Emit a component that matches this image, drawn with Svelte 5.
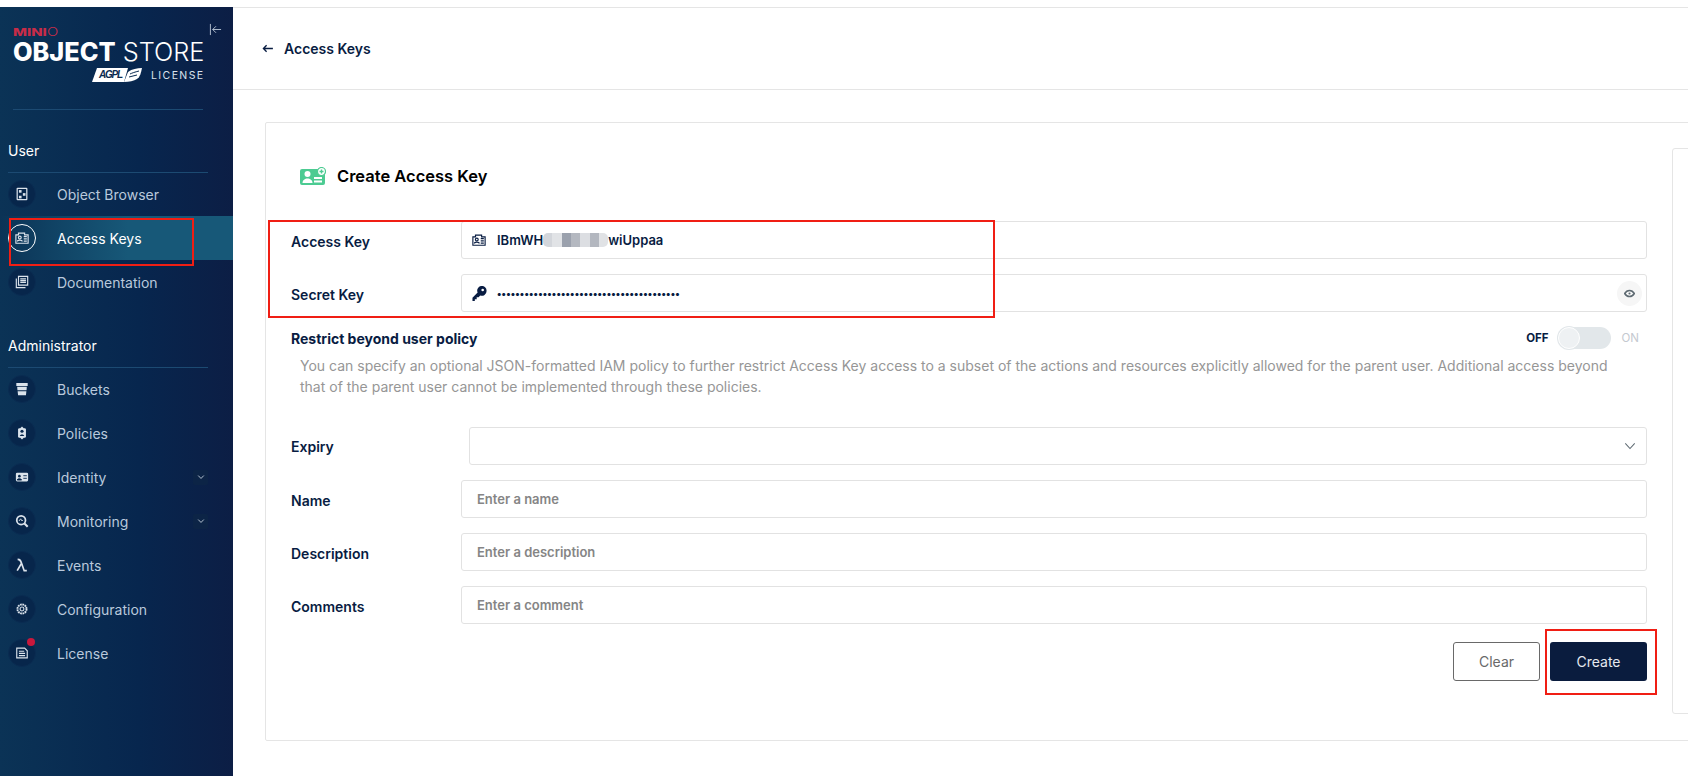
<script>
    let userItems = [
        { name: "Object Browser", icon: "browser" },
        { name: "Access Keys", icon: "keys", active: true },
        { name: "Documentation", icon: "docs" },
    ];
    let adminItems = [
        { name: "Buckets", icon: "buckets" },
        { name: "Policies", icon: "policies" },
        { name: "Identity", icon: "identity", more: true },
        { name: "Monitoring", icon: "monitoring", more: true },
        { name: "Events", icon: "events" },
        { name: "Configuration", icon: "config" },
        { name: "License", icon: "license", dot: true },
    ];
    let sections = [
        { title: "User", items: userItems },
        { title: "Administrator", items: adminItems },
    ];
    let secret = "•".repeat(40);
</script>

{#snippet idCard()}
    <svg viewBox="0 0 16 16" width="14" height="14" fill="none" stroke="currentColor" stroke-width="1.300">
        <path d="M1 4.500h3V2.500h7v2h4v9.500H1z" />
        <circle cx="5.500" cy="7.500" r="1.600" />
        <path d="M2.800 12c0-2 5.400-2 5.400 0M10 6.500h3.500M10 9h3.500M10 11.500h3.500" />
    </svg>
{/snippet}

{#snippet navIcon(name)}
    {#if name === "browser"}
        <svg viewBox="0 0 16 16" width="14" height="14" fill="none" stroke="currentColor" stroke-width="1.400">
            <rect x="2.500" y="1.500" width="11" height="13" rx="0.500" />
            <rect x="4.500" y="3.500" width="3" height="3" fill="currentColor" stroke="none" />
            <rect x="9" y="7" width="3" height="3" fill="currentColor" stroke="none" />
            <rect x="4.500" y="10" width="3" height="3" fill="currentColor" stroke="none" />
        </svg>
    {:else if name === "keys"}
        {@render idCard()}
    {:else if name === "docs"}
        <svg viewBox="0 0 16 16" width="14" height="14" fill="none" stroke="currentColor" stroke-width="1.300">
            <path d="M4 1.500h10.500v10H4zM1.500 4v10.500H12" />
            <path d="M6 4.500h6.500M6 6.500h6.500M6 8.500h6.500" />
        </svg>
    {:else if name === "buckets"}
        <svg viewBox="0 0 16 16" width="14" height="14" fill="currentColor">
            <path d="M1.500 1h13v3.500h-13zM2.500 5.500h11l-.3 4H2.800zM3 10.500h10l-.5 4.500h-9z" />
        </svg>
    {:else if name === "policies"}
        <svg viewBox="0 0 16 16" width="14" height="14" fill="currentColor">
            <path d="M8 .5 10 2.500h1.500l1 1v9l-1 1H10L8 15.500 6 13.500H4.500l-1-1v-9l1-1H6z" />
            <circle cx="8" cy="6" r="1.800" fill="#07264b" />
            <path d="M5.500 11.500c0-2.500 5-2.500 5 0z" fill="#07264b" />
        </svg>
    {:else if name === "identity"}
        <svg viewBox="0 0 16 16" width="14" height="14">
            <rect x="1" y="3" width="14" height="10" rx="1.500" fill="currentColor" />
            <circle cx="5" cy="7" r="1.500" fill="#07264b" />
            <path d="M2.500 11.500c0-2 5-2 5 0zM9.500 6.500h4M9.500 9.500h4" fill="#07264b" stroke="#07264b" />
        </svg>
    {:else if name === "monitoring"}
        <svg viewBox="0 0 16 16" width="14" height="14" fill="none" stroke="currentColor" stroke-width="2">
            <circle cx="7" cy="7" r="5" />
            <path d="m10.500 10.500 4 4" stroke-width="2.400" />
            <path d="M4.500 8 6.500 5.500 8 8l1-1" stroke-width="1" />
        </svg>
    {:else if name === "events"}
        <svg viewBox="0 0 16 16" width="14" height="14" fill="none" stroke="currentColor" stroke-width="1.900">
            <path d="M3 1.500c3 0 3.500 1.500 4.500 4.500l3 8.500h3M7.500 6 2.500 14.500" />
        </svg>
    {:else if name === "config"}
        <svg viewBox="0 0 16 16" width="14" height="14" fill="none" stroke="currentColor">
            <circle cx="8" cy="8" r="5.200" stroke-width="2.200" stroke-dasharray="2 .7" />
            <circle cx="8" cy="8" r="2.200" stroke-width="1.200" />
        </svg>
    {:else if name === "license"}
        <svg viewBox="0 0 16 16" width="14" height="14" fill="none" stroke="currentColor" stroke-width="1.300">
            <path d="M2 2.500h9l3 3v8H2z" />
            <path d="M4.500 6h6M4.500 8.500h7M4.500 11h7" />
        </svg>
    {/if}
{/snippet}

<div class="page">
    <aside class="sidebar">
        <div class="brand">
            <div class="collapse">
                <svg viewBox="0 0 14 14" width="13" height="13" fill="none" stroke="#b9c5d4" stroke-width="1">
                    <path d="M1.500 1v12M13 7H4M7.500 3.500 4 7l3.500 3.500" />
                </svg>
            </div>
            <div class="minio"><b>MINI</b>O</div>
            <div class="product"><b>OBJECT</b> STORE</div>
            <div class="lic">
                <svg class="agpl" viewBox="0 0 50 16" width="50" height="16">
                    <path d="M5 1h31l-4 14H0z" fill="#fff" />
                    <text x="7" y="10.500" font-size="10" font-style="italic" font-weight="700" fill="#0a2a50" font-family="Liberation Sans, sans-serif" textLength="24">AGPL</text>
                    <path d="M32 15 36 5c4-3 9-4 14-4-1 5-2 9-5 11-3 2-8 3-13 3z" fill="#fff" />
                    <path d="M38 7c2-1 5-2 9-3M37 10c3-1 5-1 8-2" stroke="#0a2a50" fill="none" />
                </svg>
                <span>LICENSE</span>
            </div>
        </div>
        <div class="brand-rule"></div>

        {#each sections as section}
            <section class="section">
                <h3>{section.title}</h3>
                {#each section.items as item}
                    <div class="item" class:active={item.active}>
                        <span class="circle">
                            {@render navIcon(item.icon)}
                            {#if item.dot}<i class="dot"></i>{/if}
                        </span>
                        <span class="label">{item.name}</span>
                        {#if item.more}
                            <span class="more">
                                <svg viewBox="0 0 10 10" width="8" height="8" fill="none" stroke="#b9c5d4" stroke-width="1.200">
                                    <path d="M1.500 3.200 5 6.800l3.500-3.600" />
                                </svg>
                            </span>
                        {/if}
                    </div>
                {/each}
            </section>
        {/each}
    </aside>

    <main class="main">
        <header class="topbar">
            <svg viewBox="0 0 12 10" width="11" height="9" fill="none" stroke="#081c42" stroke-width="1.500">
                <path d="M12 5H1.500M5 1.500 1.500 5 5 8.500" />
            </svg>
            <span>Access Keys</span>
        </header>

        <div class="content">
            <div class="card">
                <div class="form">
                    <h2>
                        <svg viewBox="0 0 26 18" width="26" height="18">
                            <path d="M2 2h18l1 1v4h4v9a2 2 0 0 1-2 2H2a2 2 0 0 1-2-2V4a2 2 0 0 1 2-2z" fill="#4ccb92" />
                            <circle cx="7.500" cy="7" r="3" fill="#fff" />
                            <path d="M2.500 16c0-6 10-6 10 0z" fill="#fff" />
                            <path d="M14 11h8M14 14.500h8" stroke="#fff" stroke-width="2" />
                            <circle cx="21.500" cy="4.500" r="4" fill="#fff" stroke="#4ccb92" stroke-width="1.200" />
                            <path d="M21.500 2.500v4M19.500 4.500h4" stroke="#4ccb92" stroke-width="1.400" />
                        </svg>
                        Create Access Key
                    </h2>

                    <div class="row">
                        <span class="lbl">Access Key</span>
                        <div class="field">
                            <span class="ficon">{@render idCard()}</span>
                            <span class="val">IBmWH</span>
                            <span class="blur"><i></i><i></i><i></i><i></i><i></i><i></i><i></i></span>
                            <span class="val">wiUppaa</span>
                        </div>
                    </div>
                    <div class="row">
                        <span class="lbl">Secret Key</span>
                        <div class="field">
                            <span class="ficon">
                                <svg viewBox="0 0 16 16" width="15" height="15" fill="#081c42">
                                    <path d="M15.500 5.500a5 5 0 0 1-6.700 4.700L7 12H5v2H3v2H.5v-3.500L6 7a5 5 0 1 1 9.500-1.500zM12.800 4.300a1.400 1.400 0 1 0-2.800 0 1.400 1.400 0 0 0 2.800 0z" />
                                </svg>
                            </span>
                            <span class="val secret">{secret}</span>
                            <span class="eye">
                                <svg viewBox="0 0 16 16" width="11" height="11" fill="none" stroke="#5e6a72" stroke-width="2.200">
                                    <path d="M1 8c3.500-6 10.500-6 14 0-3.500 6-10.500 6-14 0z" />
                                    <circle cx="8" cy="8" r="1.500" fill="#5e6a72" stroke="none" />
                                </svg>
                            </span>
                        </div>
                    </div>

                    <div class="restrict">
                        <strong>Restrict beyond user policy</strong>
                        <div class="toggle">
                            <b>OFF</b>
                            <span class="track"><span class="knob"></span></span>
                            <em>ON</em>
                        </div>
                    </div>
                    <p class="help">
                        You can specify an optional JSON-formatted IAM policy to further restrict Access Key access to a subset of the actions and resources explicitly allowed for the parent user. Additional access beyond that of the parent user cannot be implemented through these policies.
                    </p>

                    <div class="row expiry">
                        <span class="lbl">Expiry</span>
                        <div class="field select">
                            <svg viewBox="0 0 14 14" width="12" height="12" fill="none" stroke="#5e6a72" stroke-width="1.200">
                                <path d="M1.500 4 7 10l5.500-6" />
                            </svg>
                        </div>
                    </div>
                    <div class="row">
                        <span class="lbl">Name</span>
                        <div class="field"><input class="plain" placeholder="Enter a name" /></div>
                    </div>
                    <div class="row">
                        <span class="lbl">Description</span>
                        <div class="field"><input class="plain" placeholder="Enter a description" /></div>
                    </div>
                    <div class="row">
                        <span class="lbl">Comments</span>
                        <div class="field"><input class="plain" placeholder="Enter a comment" /></div>
                    </div>

                    <div class="actions">
                        <button class="clear">Clear</button>
                        <button class="create">Create</button>
                    </div>
                </div>
                <div class="side-panel"></div>
            </div>
        </div>
    </main>

    <!-- red annotation boxes drawn over the screenshot -->
    <div class="mark m1"></div>
    <div class="mark m2"></div>
    <div class="mark m3"></div>
</div>

<style>
    :global(body) {
        margin: 0;
        font-family: Inter, "Liberation Sans", sans-serif;
        background: #fff;
        overflow: hidden;
    }

    .page {
        position: relative;
        display: flex;
        height: 769px;
        margin-top: 7px;
        overflow: hidden;
    }

    .sidebar {
        width: 233px;
        flex: none;
        background: linear-gradient(90deg, #0b3356 0%, #07264e 60%, #0c1e45 100%);
        color: #b9c9dc;
    }

    .brand {
        position: relative;
        height: 102px;
        box-sizing: border-box;
        padding: 20px 0 0 13px;
        color: #fff;
    }

    .collapse {
        position: absolute;
        top: 13px;
        left: 209px;
    }

    .minio {
        font-size: 11px;
        line-height: 10px;
        color: #c72c48;
        font-weight: 300;
        transform: scaleX(1.350);
        transform-origin: left;
    }

    .minio b {
        font-weight: 800;
    }

    .product {
        font-size: 25.300px;
        line-height: 30px;
        font-weight: 300;
        white-space: nowrap;
    }

    .product b {
        font-weight: 800;
    }

    .lic {
        display: flex;
        align-items: center;
        gap: 9px;
        margin: 0 0 0 79px;
        height: 16px;
    }

    .lic span {
        font-size: 10.500px;
        letter-spacing: 1.400px;
        color: #dbe3ec;
    }

    .brand-rule {
        height: 1px;
        margin: 0 30px 0 13px;
        background: #1c4a72;
    }

    .section {
        margin-bottom: 32px;
    }

    .section:first-of-type {
        margin-top: 31px;
    }

    .section h3 {
        margin: 0 25px -1px 8px;
        padding-bottom: 11px;
        border-bottom: 1px solid #1c4a72;
        font-size: 14px;
        line-height: 20px;
        font-weight: 400;
        color: #fff;
    }

    .item {
        display: flex;
        align-items: center;
        height: 44px;
        padding-left: 8px;
    }

    .item.active {
        background: linear-gradient(90deg, #0b3356 0%, #175878 55%);
        color: #fff;
    }

    .circle {
        position: relative;
        display: flex;
        align-items: center;
        justify-content: center;
        width: 26px;
        height: 26px;
        border-radius: 50%;
        background: #07264b;
        border: 1px solid #0a2c52;
        color: #dbe3ec;
        flex: none;
    }

    .active .circle {
        border-color: #fff;
        background: transparent;
    }

    .dot {
        position: absolute;
        top: -2px;
        right: 0;
        width: 8px;
        height: 8px;
        border-radius: 50%;
        background: #c8183c;
    }

    .label {
        margin-left: 21px;
        font-size: 14px;
    }

    .more {
        display: flex;
        align-items: center;
        justify-content: center;
        width: 15px;
        height: 15px;
        margin-left: auto;
        margin-right: 25px;
        border-radius: 2px;
        background: #0c2446;
    }

    .main {
        flex: 1;
        min-width: 0;
        border-top: 1px solid #e5e5e5;
    }

    .topbar {
        display: flex;
        align-items: center;
        gap: 11px;
        height: 81px;
        padding-left: 29px;
        border-bottom: 1px solid #e5e5e5;
        font-size: 14px;
        font-weight: 600;
        color: #081c42;
    }

    .content {
        padding: 32px 0 0 32px;
    }

    .card {
        display: flex;
        height: 619px;
        box-sizing: border-box;
        width: 1500px;
        border: 1px solid #e5e5e5;
        border-radius: 2px;
    }

    .form {
        flex: none;
        width: 1356px;
        padding: 40px 0 0 25px;
        margin-right: 25px;
    }

    h2 {
        display: flex;
        align-items: center;
        gap: 11px;
        margin: 0 0 33px 9px;
        height: 25px;
        font-size: 16.500px;
        font-weight: 600;
        color: #000;
    }

    .row {
        display: flex;
        align-items: center;
        margin-bottom: 15px;
    }

    .lbl {
        width: 170px;
        flex: none;
        padding-top: 2px;
        font-size: 14px;
        font-weight: 600;
        color: #081c42;
    }

    .row.expiry .lbl {
        width: 178px;
        padding-top: 0;
    }

    .field {
        display: flex;
        align-items: center;
        flex: 1;
        height: 38px;
        box-sizing: border-box;
        border: 1px solid #e2e2e2;
        border-radius: 3px;
        background: #fff;
    }

    .ficon {
        display: flex;
        width: 35px;
        flex: none;
        padding-left: 10px;
        box-sizing: border-box;
        color: #081c42;
    }

    input {
        border: 0;
        outline: 0;
        padding: 0;
        font-family: inherit;
        background: transparent;
        flex: 1;
        min-width: 0;
    }

    .val {
        font-size: 13px;
        font-weight: 600;
        color: #081c42;
    }

    .secret {
        flex: 1;
        font-size: 10px;
        font-weight: 800;
        letter-spacing: 0.190px;
    }

    .plain {
        padding-left: 15px;
        font-size: 13px;
        font-weight: 600;
    }

    .plain::placeholder {
        color: #858585;
        opacity: 1;
    }

    .blur {
        display: flex;
        width: 65px;
        height: 14px;
        overflow: hidden;
        border-radius: 5px;
    }

    .blur i {
        flex: 1;
        background: #d3d6db;
    }

    .blur i:nth-child(2) { background: #e1e3e6; }
    .blur i:nth-child(3) { background: #9ba1ad; }
    .blur i:nth-child(4) { background: #b4b8c0; }
    .blur i:nth-child(5) { background: #dcdee2; }
    .blur i:nth-child(6) { background: #b3b7bf; }
    .blur i:nth-child(7) { background: #e0e2e5; }

    .eye {
        display: flex;
        align-items: center;
        justify-content: center;
        width: 25px;
        height: 25px;
        margin-right: 4px;
        border-radius: 50%;
        background: #f6f6f6;
    }

    .select {
        justify-content: flex-end;
        padding-right: 10px;
    }

    .restrict {
        display: flex;
        align-items: center;
        justify-content: space-between;
        height: 22px;
        padding-right: 8px;
    }

    .restrict strong {
        font-size: 14px;
        font-weight: 700;
        color: #081c42;
    }

    .toggle {
        display: flex;
        align-items: center;
        font-size: 11.500px;
    }

    .toggle b {
        font-weight: 700;
        color: #081c42;
        margin-right: 9px;
    }

    .toggle em {
        font-style: normal;
        color: #c4c9d0;
        margin-left: 11px;
    }

    .track {
        position: relative;
        display: block;
        width: 53px;
        height: 22px;
        border-radius: 11px;
        background: #e2e7ea;
    }

    .knob {
        position: absolute;
        left: 0;
        top: 0;
        width: 20px;
        height: 20px;
        border-radius: 50%;
        border: 1px solid #fff;
        background: #eef1f3;
        box-shadow: 0 0 0 1px #e2e7ea;
    }

    .help {
        margin: 6px 30px 30px 9px;
        font-size: 14px;
        line-height: 21px;
        color: #969696;
    }

    .actions {
        display: flex;
        justify-content: flex-end;
        gap: 10px;
        margin-top: 18px;
    }

    button {
        height: 39px;
        border-radius: 3px;
        font-family: inherit;
        font-size: 14px;
    }

    .clear {
        width: 87px;
        border: 1px solid #696969;
        background: #fff;
        color: #696969;
    }

    .create {
        width: 97px;
        border: 0;
        background: #0a1c3e;
        color: #e6e9ef;
    }

    .side-panel {
        width: 120px;
        height: 566px;
        margin-top: 25px;
        flex: none;
        box-sizing: border-box;
        border: 1px solid #e5e5e5;
        border-radius: 3px;
    }

    .mark {
        position: absolute;
        box-sizing: border-box;
        border: 2px solid #f01e14;
        pointer-events: none;
    }

    .m1 { left: 9px; top: 211px; width: 185px; height: 48px; }
    .m2 { left: 268px; top: 213px; width: 727px; height: 98px; }
    .m3 { left: 1545px; top: 622px; width: 112px; height: 66px; }
</style>
